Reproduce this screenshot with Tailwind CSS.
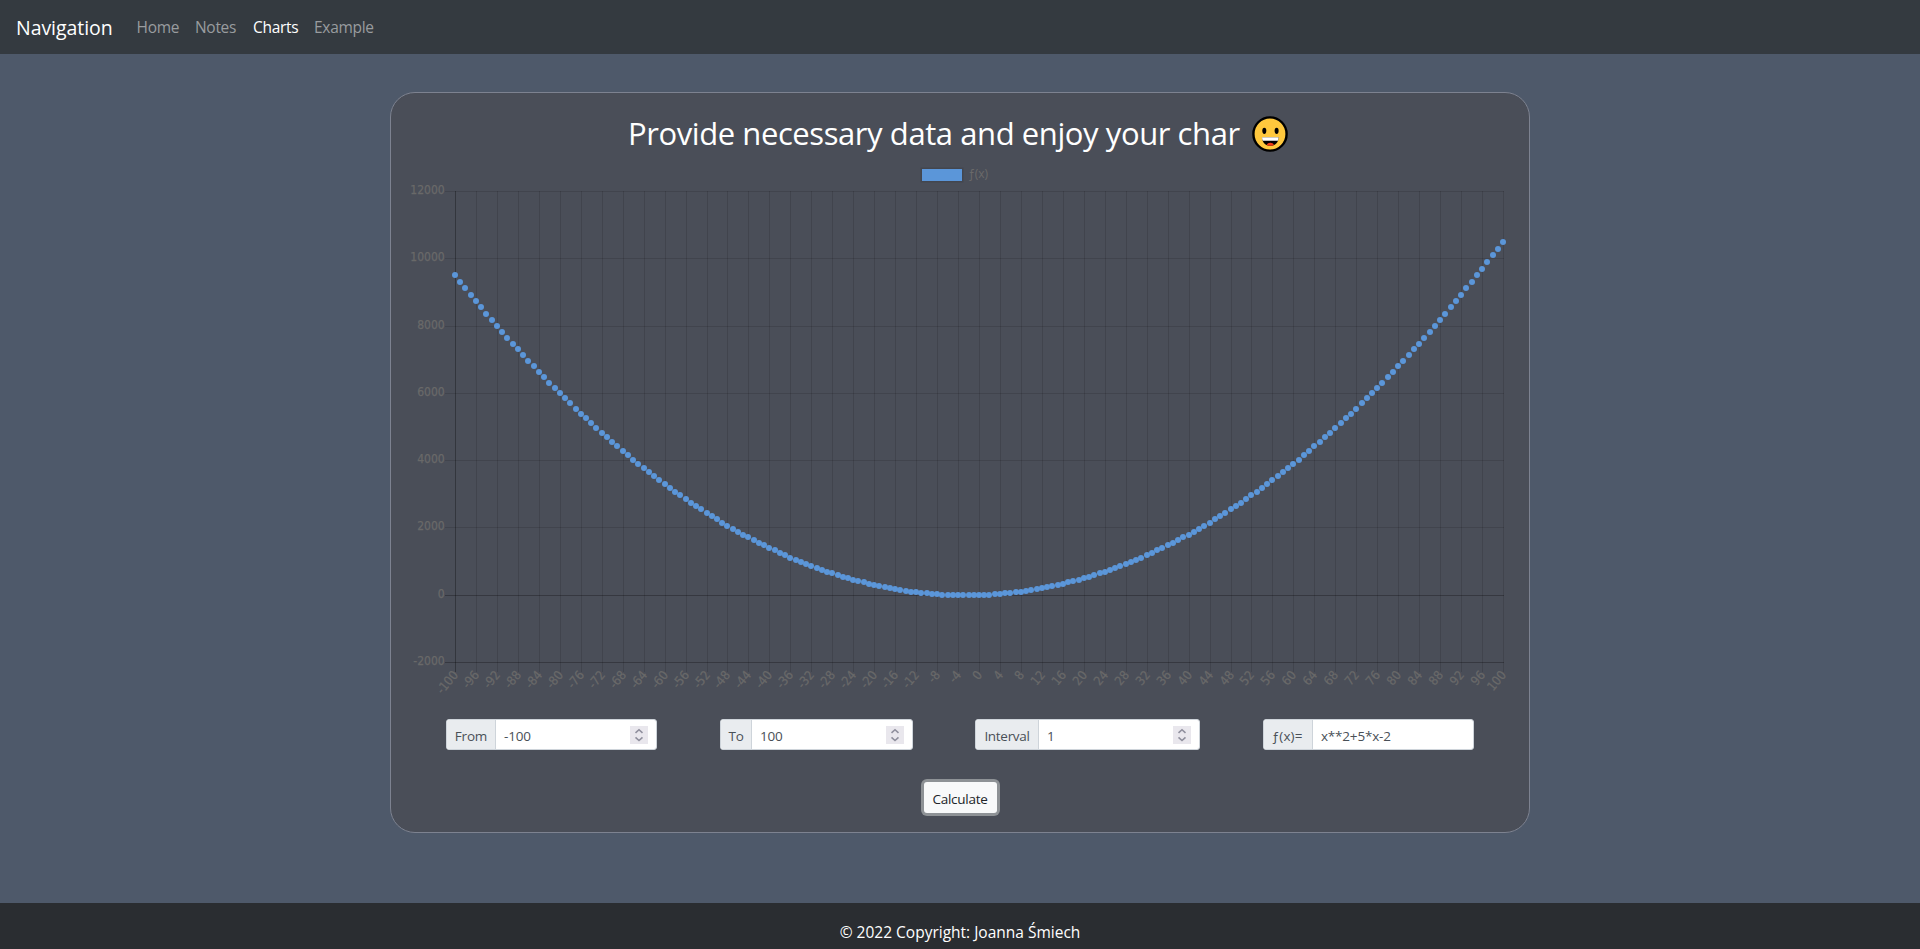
<!DOCTYPE html>
<html lang="en">
<head>
<meta charset="utf-8">
<title>Charts</title>
<script src="https://cdn.jsdelivr.net/npm/@tailwindcss/browser@4"></script>
</head>
<body class="h-[949px] overflow-hidden flex flex-col bg-[#4e596a] font-['Open_Sans',sans-serif] text-white">
<nav class="h-[54px] shrink-0 bg-[#343a40] flex items-center px-4 pt-[2px]">
  <a class="w-[120.5px] text-[19.5px] tracking-[-0.05px]">Navigation</a>
  <div class="flex gap-4 text-[15.5px] tracking-[-0.3px] text-[#999c9f]">
    <a class="w-[42.5px] whitespace-nowrap">Home</a><a class="w-[42px] whitespace-nowrap">Notes</a><a class="w-[45px] whitespace-nowrap text-white">Charts</a><a>Example</a>
  </div>
</nav>
<main class="grow flex flex-col items-center pt-[38px]">
  <section class="w-[1140px] h-[741px] rounded-[25px] border border-[#7d8290] bg-[#4a4e58] flex flex-col">
    <h1 class="h-[67px] pt-[14px] pl-[237px] flex items-center text-[31px] leading-none tracking-[-0.42px] whitespace-nowrap">
      <span class="w-[624px]">Provide necessary data and enjoy your char</span>
      <svg class="w-9 h-9 shrink-0" viewBox="0 0 36 36">
        <circle cx="18" cy="18" r="16.6" fill="#ffc83d" stroke="#000" stroke-width="2.4"/>
        <ellipse cx="12.3" cy="14.8" rx="2" ry="3.1" fill="#000"/><ellipse cx="24.6" cy="14.8" rx="2" ry="3.1" fill="#000"/>
        <path d="M10 21.2h16.6c0 5.200-3.500 8.600-8.300 8.600s-8.300-3.400-8.300-8.600z" fill="#000"/>
        <path d="M10 21.200h16.600c0 1.500-.3 2.700-.8 3.600H10.800c-.5-.9-.8-2.100-.8-3.600z" fill="#fff"/>
        <path d="M14.700 28.900c.5-1.400 1.900-2.100 3.600-2.100s3.100.7 3.600 2.100c-2.100 1.200-5.100 1.200-7.200 0z" fill="#f03a17"/>
      </svg>
    </h1>
    <svg id="chart" class="w-[1138px] h-[550px] shrink-0 font-['DejaVu_Sans_Condensed',sans-serif] text-[12px]" viewBox="391 160 1138 550">
      <rect x="920.5" y="167.500" width="43" height="15" fill="#43464f"/>
      <rect x="922" y="169" width="40" height="12" fill="#5b96d9"/>
      <text x="968" y="178" fill="#6a6a6a" class="font-['Open_Sans',sans-serif]" textLength="20">ƒ(x)</text>
    </svg>
    <div class="h-[31px] mt-[9px] shrink-0 flex pl-[55px] text-[13.5px] leading-[20px] tracking-[-0.2px] text-[#495057]">
      <label class="w-[211px] mr-[63px] flex rounded-[3px] border border-[#ced4da] bg-white overflow-hidden"><span class="w-[49px] shrink-0 bg-[#e9ecef] border-r border-[#ced4da] flex items-center justify-center pt-[2px]">From</span><span class="grow flex items-center pl-2 pt-[2px]">-100</span><svg class="w-[18px] h-[18px] mr-2 self-center bg-[#e9e7ed]" viewBox="0 0 18 18" fill="none" stroke="#8f8f9d" stroke-width="1.6"><path d="M5.500 6.800 9 3.700l3.500 3.100M5.500 11.400 9 14.500l3.500-3.100"/></svg></label>
      <label class="w-[193px] mr-[62px] flex rounded-[3px] border border-[#ced4da] bg-white overflow-hidden"><span class="w-[31px] shrink-0 bg-[#e9ecef] border-r border-[#ced4da] flex items-center justify-center pt-[2px]">To</span><span class="grow flex items-center pl-2 pt-[2px]">100</span><svg class="w-[18px] h-[18px] mr-2 self-center bg-[#e9e7ed]" viewBox="0 0 18 18" fill="none" stroke="#8f8f9d" stroke-width="1.6"><path d="M5.500 6.800 9 3.700l3.500 3.100M5.500 11.400 9 14.500l3.500-3.100"/></svg></label>
      <label class="w-[225px] mr-[63px] flex rounded-[3px] border border-[#ced4da] bg-white overflow-hidden"><span class="w-[63px] shrink-0 bg-[#e9ecef] border-r border-[#ced4da] flex items-center justify-center pt-[2px] tracking-[-0.3px]">Interval</span><span class="grow flex items-center pl-2 pt-[2px]">1</span><svg class="w-[18px] h-[18px] mr-2 self-center bg-[#e9e7ed]" viewBox="0 0 18 18" fill="none" stroke="#8f8f9d" stroke-width="1.6"><path d="M5.500 6.800 9 3.700l3.500 3.100M5.500 11.400 9 14.500l3.500-3.100"/></svg></label>
      <label class="w-[211px] flex rounded-[3px] border border-[#ced4da] bg-white overflow-hidden"><span class="w-[49px] shrink-0 bg-[#e9ecef] border-r border-[#ced4da] flex items-center justify-center pt-[2px] pr-[2px] tracking-[0.1px]">ƒ(x)=</span><span class="grow flex items-center pl-2 pt-[2px]">x**2+5*x-2</span></label>
    </div>
    <button class="mt-[32px] pt-[2px] w-[73px] h-[31px] shrink-0 self-center rounded-[3px] bg-[#f8f9fa] shadow-[0_0_0_3px_#8e9296] text-[13.5px] leading-[20px] tracking-[-0.25px] text-[#212529]">Calculate</button>
  </section>
</main>
<footer class="h-[46px] shrink-0 bg-[#2a2d31] flex justify-center pt-[18px] text-[15.5px] leading-[23px]">© 2022 Copyright: Joanna Śmiech</footer>
<script>
const svg = document.getElementById('chart');
const add = (name, attrs, text) => {
  const el = document.createElementNS('http://www.w3.org/2000/svg', name);
  for (const k in attrs) el.setAttribute(k, attrs[k]);
  if (text !== undefined) el.textContent = text;
  svg.appendChild(el);
};
const px = v => 455 + (v + 100) * 5.24;
const py = v => 595 - v * 67.29 / 2000;
const label = {'text-anchor': 'end', fill: '#696969', stroke: '#696969', 'stroke-width': 0.25};
for (let v = -100; v <= 100; v += 4) {
  const x = Math.round(px(v)) + 0.5;
  add('line', {x1: x, x2: x, y1: 191, y2: 672, stroke: v === -100 ? 'rgba(0,0,0,.3)' : 'rgba(0,0,0,.12)'});
  add('text', {...label, transform: `translate(${x},672.3) rotate(-50)`, y: 4.4, 'font-size': 12.6, style: 'font-size:12.6px'}, v);
}
for (let v = -2000; v <= 12000; v += 2000) {
  const y = Math.round(py(v) - 0.3) + 0.5;
  add('line', {x1: 445, x2: 1504, y1: y, y2: y, stroke: v === 0 || v === -2000 ? 'rgba(0,0,0,.27)' : 'rgba(0,0,0,.12)'});
  add('text', {...label, x: 444.7, y: y + 2.7}, v);
}
for (let v = -100; v <= 100; v++)
  add('circle', {cx: Math.round(px(v)), cy: Math.round(py(v * v + 5 * v - 2)), r: 3, fill: '#5b96d9'});
</script>
</body>
</html>
